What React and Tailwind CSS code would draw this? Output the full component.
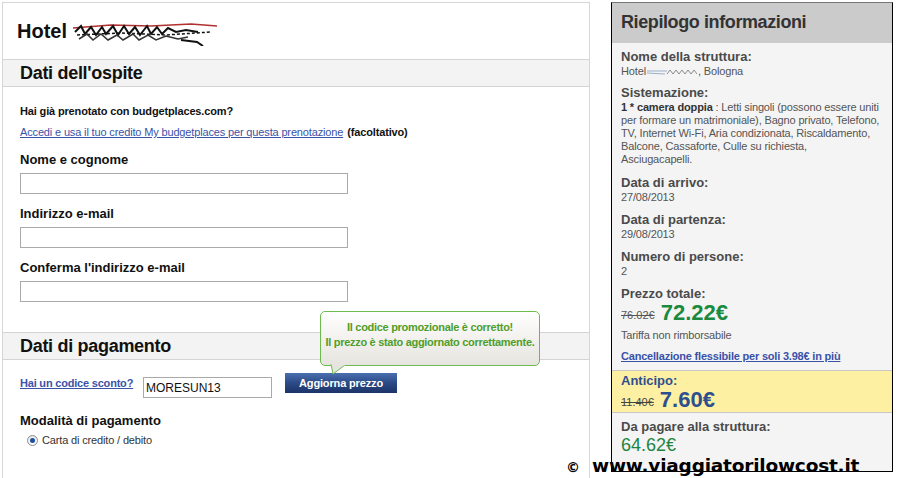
import React from 'react';

const font = { fontFamily: '"Liberation Sans", Arial, sans-serif' };

// scribbled-out hotel name next to "Hotel"
const Scribble = () => (
  <svg width="150" height="26" viewBox="0 0 150 26" className="ml-[4px] mt-[4px]">
    <path d="M2 8 L40 5 L80 6 L120 4 L146 6" stroke="#b03030" strokeWidth="1.5" fill="none" />
    <path d="M4 12 l6 -6 l4 8 l6 -7 l5 8 l6 -8 l4 7 l7 -8 l5 9 l6 -9 l5 8 l6 -7 l5 8 l7 -9 l4 8 l6 -7 l5 7 l6 -6 l8 4 l10 -2 l12 2" stroke="#111" strokeWidth="2" fill="none" />
    <path d="M6 15 L50 13 L95 15 L140 12" stroke="#111" strokeWidth="1.5" strokeDasharray="3 2" fill="none" />
    <path d="M8 19 l8 -5 l6 6 l8 -6 l7 6 l9 -5 l6 5 l10 -6 l6 6 l9 -5 l8 5 l10 -4 l12 3 l10 -2" stroke="#333" strokeWidth="1.5" fill="none" />
    <path d="M110 20 l16 2 l6 4" stroke="#111" strokeWidth="2" fill="none" />
  </svg>
);

const SmallScribble = () => (
  <svg width="50" height="10" viewBox="0 0 50 10" className="mx-[1px]">
    <path d="M0 4 L20 4 M0 6 L18 7" stroke="#9bb0c8" strokeWidth="1.2" />
    <path d="M20 7 l3 -4 l3 4 l3 -4 l3 4 l3 -4 l3 4 l3 -4 l3 4 l3 -4 l3 4" stroke="#8a8a8a" strokeWidth="1" fill="none" />
  </svg>
);

const SectionHeader = ({ children, className = '' }) => (
  <div className={`h-[28px] border-y border-[#d4d4d4] bg-[#f3f3f3] pl-[17px] text-[18px] font-bold leading-[26px] tracking-[-0.3px] text-[#111] ${className}`}>
    {children}
  </div>
);

const Field = ({ label, className = '' }) => (
  <div className={className}>
    <div className="text-[13px] font-bold leading-[16px] text-[#111]">{label}</div>
    <div className="mt-[5px] h-[21px] w-[328px] border border-[#a9a9a9] bg-white" />
  </div>
);

const InfoBlock = ({ label, children, className = '' }) => (
  <div className={className}>
    <div className="text-[13px] font-bold leading-[16px] text-[#4a4a4a]">{label}</div>
    <div className="text-[11px] leading-[13px] tracking-[-0.15px] text-[#555]">{children}</div>
  </div>
);

const rooms = [
  'per formare un matrimoniale), Bagno privato, Telefono,',
  'TV, Internet Wi-Fi, Aria condizionata, Riscaldamento,',
  'Balcone, Cassaforte, Culle su richiesta,',
  'Asciugacapelli.',
];

export default function App() {
  return (
    <div className="relative flex h-[478px] w-[900px] overflow-hidden bg-white" style={font}>
      {/* Left: guest form */}
      <div className="ml-[2px] mt-[2px] w-[588px] border-x border-t border-[#d6d6d6]">
        <div className="flex h-[56px] items-center pl-[14px]">
          <span className="text-[20px] font-bold text-[#111]">Hotel</span>
          <Scribble />
        </div>

        <SectionHeader>Dati dell'ospite</SectionHeader>

        <div className="pl-[17px]">
          <div className="mt-[17px] text-[11px] font-bold leading-[14px] tracking-[-0.15px] text-[#111]">
            Hai già prenotato con budgetplaces.com?
          </div>
          <div className="mt-[7px] text-[11px] leading-[14px] tracking-[-0.15px]">
            <a className="text-[#3a52a8] underline">Accedi e usa il tuo credito My budgetplaces per questa prenotazione</a>
            <span className="ml-[4px] font-bold text-[#111]">(facoltativo)</span>
          </div>
          <Field label="Nome e cognome" className="mt-[13px]" />
          <Field label="Indirizzo e-mail" className="mt-[12px]" />
          <Field label="Conferma l'indirizzo e-mail" className="mt-[12px]" />
        </div>

        <SectionHeader className="mt-[30px]">Dati di pagamento</SectionHeader>

        <div className="pl-[17px]">
          <div className="relative mt-[13px] flex items-start">
            <a className="mt-[3px] w-[123px] text-[11px] font-bold leading-[14px] tracking-[-0.2px] text-[#3a52a8] underline">
              Hai un codice sconto?
            </a>
            <div className="mt-[4px] flex h-[21px] w-[129px] items-center border border-[#a9a9a9] pl-[2px] text-[12px] text-[#111]">
              MORESUN13
            </div>
            <button className="ml-[13px] h-[20px] w-[112px] bg-gradient-to-b from-[#4a6fb0] via-[#2c4a86] to-[#1c3468] text-[11px] font-bold tracking-[-0.15px] text-white">
              Aggiorna prezzo
            </button>

            {/* success tooltip */}
            <div className="absolute left-[300px] top-[-62px] w-[220px]">
              <div className="h-[55px] whitespace-nowrap rounded-[5px] border border-[#6dbb4e] bg-gradient-to-b from-white to-[#e6e4de] pt-[8px] text-center text-[11px] font-bold leading-[15px] tracking-[-0.3px] text-[#4f9e2c]">
                <div>Il codice promozionale è corretto!</div>
                <div>Il prezzo è stato aggiornato correttamente.</div>
              </div>
              <svg width="20" height="11" viewBox="0 0 20 11" className="absolute left-[10px] top-[53px]">
                <path d="M1 0 L3 10 L15 1" fill="#e6e4de" stroke="#6dbb4e" strokeWidth="1" />
                <path d="M1.5 0.5 L15 0.5" stroke="#e6e4de" strokeWidth="2" />
              </svg>
            </div>
          </div>

          <div className="mt-[15px] text-[13px] font-bold leading-[16px] text-[#111]">Modalità di pagamento</div>
          <div className="mt-[4px] flex items-center pl-[7px] text-[11px] leading-[14px] tracking-[-0.15px] text-[#333]">
            <span className="flex h-[11px] w-[11px] items-center justify-center rounded-full border border-[#8a8a8a] bg-gradient-to-b from-[#e8e8e8] to-white">
              <span className="h-[5px] w-[5px] rounded-full bg-[#1f4fa0]" />
            </span>
            <span className="ml-[4px]">Carta di credito / debito</span>
          </div>
        </div>
      </div>

      {/* Right: summary */}
      <div className="ml-[21px] mt-[2px] h-[470px] w-[282px] border-x border-b border-t border-black border-t-[#777] bg-[#f4f4f4]">
        <div className="h-[40px] bg-[#cbcbcb] pl-[9px] text-[18px] font-bold leading-[38px] tracking-[-0.4px] text-[#333]">
          Riepilogo informazioni
        </div>

        <div className="px-[9px] pt-[6px]">
          <InfoBlock label="Nome della struttura:">
            <span className="flex items-center">
              Hotel<SmallScribble />, Bologna
            </span>
          </InfoBlock>
          <InfoBlock label="Sistemazione:" className="mt-[7px]">
            <div className="whitespace-nowrap">
              <span className="font-bold text-[#333]">1 * camera doppia</span> : Letti singoli (possono essere uniti
            </div>
            {rooms.map((line) => (
              <div key={line} className="whitespace-nowrap">{line}</div>
            ))}
          </InfoBlock>
          <InfoBlock label="Data di arrivo:" className="mt-[9px]">27/08/2013</InfoBlock>
          <InfoBlock label="Data di partenza:" className="mt-[8px]">29/08/2013</InfoBlock>
          <InfoBlock label="Numero di persone:" className="mt-[8px]">2</InfoBlock>

          <div className="mt-[8px] text-[13px] font-bold leading-[16px] text-[#4a4a4a]">Prezzo totale:</div>
          <div className="flex items-end leading-[22px]">
            <span className="mb-[2px] text-[11px] leading-[14px] text-[#555] line-through">76.02€</span>
            <span className="ml-[6px] text-[22px] font-bold text-[#1a8a3e]">72.22€</span>
          </div>
          <div className="mt-[4px] text-[11px] leading-[14px] tracking-[-0.15px] text-[#555]">Tariffa non rimborsabile</div>
          <a className="mt-[7px] block text-[11px] font-bold leading-[14px] tracking-[-0.2px] text-[#3a52a8] underline">
            Cancellazione flessibile per soli 3.98€ in più
          </a>
        </div>

        <div className="mt-[7px] h-[43px] border-y border-[#c8c8c8] bg-[#fdf0a2] px-[9px] pt-[2px]">
          <div className="text-[13px] font-bold leading-[16px] text-[#2d4f8f]">Anticipo:</div>
          <div className="flex items-end leading-[22px]">
            <span className="mb-[2px] text-[11px] leading-[14px] text-[#444] line-through">11.40€</span>
            <span className="ml-[6px] text-[22px] font-bold text-[#2d4f8f]">7.60€</span>
          </div>
        </div>

        <div className="px-[9px] pt-[6px]">
          <div className="text-[13px] font-bold leading-[16px] text-[#4a4a4a]">Da pagare alla struttura:</div>
          <div className="text-[18px] leading-[20px] text-[#1f8442]">64.62€</div>
        </div>
      </div>

      {/* watermark */}
      <div
        className="absolute left-[566px] top-[452px] flex items-baseline text-[18.5px] font-bold text-black"
        style={{ fontFamily: '"DejaVu Sans", sans-serif' }}
      >
        <span className="text-[14px]">©</span>
        <span className="ml-[12px] tracking-[-0.2px]">www.viaggiatorilowcost.it</span>
      </div>
    </div>
  );
}
